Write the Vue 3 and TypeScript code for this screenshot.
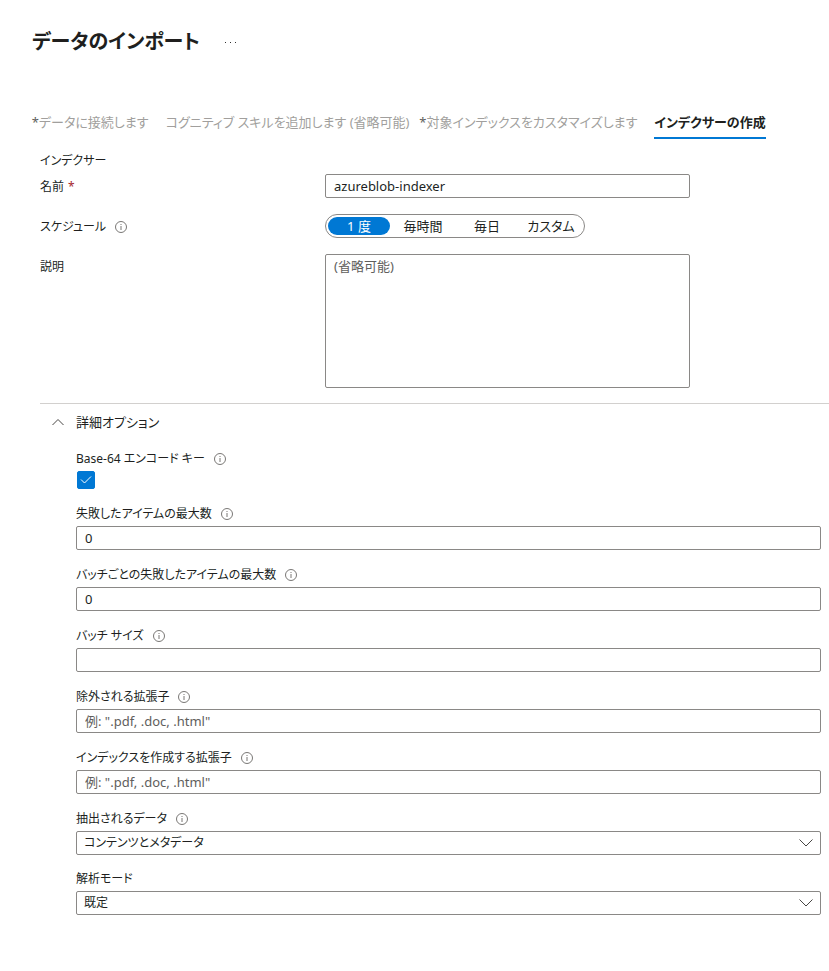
<script setup lang="ts">
import { ref } from 'vue'

interface Tab {
  label: string
  required: boolean
}

interface TextField {
  id: string
  label: string
  placeholder: string
  value: string
}

interface SelectField {
  id: string
  label: string
  info: boolean
  options: string[]
  value: string
}

const tabs: Tab[] = [
  { label: 'データに接続します', required: true },
  { label: 'コグニティブ スキルを追加します (省略可能)', required: false },
  { label: '対象インデックスをカスタマイズします', required: true },
  { label: 'インデクサーの作成', required: false },
]
const activeTab = ref(3)

const indexerName = ref('azureblob-indexer')
const description = ref('')
const schedules: string[] = ['1 度', '毎時間', '毎日', 'カスタム']
const schedule = ref('1 度')

const expanded = ref(true)
const encodeKeys = ref(true)

const textFields = ref<TextField[]>([
  { id: 'max-failed', label: '失敗したアイテムの最大数', placeholder: '', value: '0' },
  { id: 'max-failed-batch', label: 'バッチごとの失敗したアイテムの最大数', placeholder: '', value: '0' },
  { id: 'batch-size', label: 'バッチ サイズ', placeholder: '', value: '' },
  { id: 'excluded', label: '除外される拡張子', placeholder: '例: ".pdf, .doc, .html"', value: '' },
  { id: 'indexed', label: 'インデックスを作成する拡張子', placeholder: '例: ".pdf, .doc, .html"', value: '' },
])

const selectFields = ref<SelectField[]>([
  { id: 'extract', label: '抽出されるデータ', info: true, options: ['コンテンツとメタデータ'], value: 'コンテンツとメタデータ' },
  { id: 'parsing', label: '解析モード', info: false, options: ['既定'], value: '既定' },
])
</script>

<template>
  <main class="page">
    <header class="header">
      <h1 class="title">データのインポート</h1>
      <button class="more" type="button" aria-label="その他">
        <svg width="13" height="3" viewBox="0 0 13 3"><path d="M1 1h1v1H1zM6 1h1v1H6zM11 1h1v1h-1z" fill="#323130" /></svg>
      </button>
    </header>

    <nav class="tabs">
      <button
        v-for="(tab, i) in tabs"
        :key="tab.label"
        type="button"
        class="tab"
        :class="{ active: i === activeTab }"
        @click="activeTab = i"
      >
        <span v-if="tab.required" class="tab-star">*</span>{{ tab.label }}
      </button>
    </nav>

    <section class="basics">
      <h2 class="section-title">インデクサー</h2>
      <div class="row">
        <label class="label" for="name">名前 <span class="required">*</span></label>
        <input id="name" v-model="indexerName" class="control" type="text" />
      </div>
      <div class="row">
        <div id="schedule-label" class="label">
          スケジュール
          <svg class="info" viewBox="0 0 12 12"><circle cx="6" cy="6" r="5.5" /><path d="M6 5v4M6 3v1" /></svg>
        </div>
        <div class="segments" role="radiogroup" aria-labelledby="schedule-label">
          <label v-for="s in schedules" :key="s" class="segment" :class="{ on: s === schedule }">
            <input v-model="schedule" class="segment-input" type="radio" name="schedule" :value="s" />{{ s }}
          </label>
        </div>
      </div>
      <div class="row">
        <label class="label" for="description">説明</label>
        <textarea id="description" v-model="description" class="control area" placeholder="(省略可能)"></textarea>
      </div>
    </section>

    <section class="advanced">
      <button class="toggle" type="button" :aria-expanded="expanded" @click="expanded = !expanded">
        <svg class="chevron" :class="{ closed: !expanded }" width="12" height="8" viewBox="0 0 12 8"><path d="M.5 7L6 1.5 11.5 7" /></svg>
        詳細オプション
      </button>

      <div v-if="expanded" class="fields">
        <div class="check-field">
          <label class="label" for="encode">
            Base-64 エンコード キー
            <svg class="info" viewBox="0 0 12 12"><circle cx="6" cy="6" r="5.5" /><path d="M6 5v4M6 3v1" /></svg>
          </label>
          <span class="check">
            <input id="encode" v-model="encodeKeys" class="check-input" type="checkbox" />
            <svg v-if="encodeKeys" class="check-mark" width="12" height="8" viewBox="0 0 12 8"><path d="M1 3.5L4.5 7 11 .5" /></svg>
          </span>
        </div>

        <div v-for="f in textFields" :key="f.id" class="field">
          <label class="label" :for="f.id">
            {{ f.label }}
            <svg class="info" viewBox="0 0 12 12"><circle cx="6" cy="6" r="5.5" /><path d="M6 5v4M6 3v1" /></svg>
          </label>
          <input :id="f.id" v-model="f.value" class="control" type="text" :placeholder="f.placeholder" />
        </div>

        <div class="selects">
          <div v-for="f in selectFields" :key="f.id" class="field">
            <label class="label" :for="f.id">
              {{ f.label }}
              <svg v-if="f.info" class="info" viewBox="0 0 12 12"><circle cx="6" cy="6" r="5.5" /><path d="M6 5v4M6 3v1" /></svg>
            </label>
            <span class="select-wrap">
              <select :id="f.id" v-model="f.value" class="control select">
                <option v-for="o in f.options" :key="o">{{ o }}</option>
              </select>
              <svg class="chevron drop" width="14" height="8" viewBox="0 0 14 8"><path d="M.5 .5L7 7 13.5 .5" /></svg>
            </span>
          </div>
        </div>
      </div>
    </section>
  </main>
</template>

<style>
body {
  background: #fff;
}
</style>

<style scoped>
.page {
  padding: 24px 0 56px;
  color: #201f1e;
  font-family: "Noto Sans", "Noto Sans CJK JP", sans-serif;
  font-feature-settings: "palt";
  font-size: 13px;
  line-height: 20px;
}

.page button,
.page input,
.page textarea,
.page select {
  margin: 0;
  color: inherit;
  font: inherit;
  font-feature-settings: inherit;
}

.header {
  display: flex;
  align-items: center;
  gap: 24px;
  padding-left: 32px;
}

.title {
  margin: 0;
  font-size: 20px;
  font-weight: 600;
  line-height: 36px;
}

.more {
  display: flex;
  padding: 0;
  border: 0;
  background: none;
}

.tabs {
  display: flex;
  gap: 17px;
  margin-top: 48px;
  padding-left: 39px;
}

.tab {
  position: relative;
  padding: 4px 0 5px;
  border: 0;
  border-bottom: 2px solid transparent;
  background: none;
  white-space: nowrap;
}

.page .tab {
  color: #a19f9d;
}

.page .tab.active {
  border-bottom-color: #0078d4;
  color: #201f1e;
  font-weight: 600;
}

.tab-star {
  position: absolute;
  right: 100%;
  color: #605e5c;
}

.basics {
  display: grid;
  gap: 16px;
  padding: 12px 8px 15px 40px;
}

.section-title {
  margin: 0 0 -13px;
  font-size: 12px;
  font-weight: 400;
}

.row {
  display: grid;
  grid-template-columns: 285px minmax(0, 365px);
}

.label {
  display: flex;
  align-items: center;
  gap: 9px;
  box-sizing: border-box;
  height: 24px;
  font-size: 12px;
}

.row .label {
  padding-top: 2px;
}

.required {
  margin-left: -5px;
  color: #a4262c;
}

.info {
  width: 12px;
  height: 12px;
  fill: none;
  stroke: #797775;
}

.control {
  box-sizing: border-box;
  width: 100%;
  height: 24px;
  padding: 0 8px;
  border: 1px solid #8a8886;
  border-radius: 2px;
  background: #fff;
}

.control::placeholder {
  color: #605e5c;
  opacity: 1;
}

.area {
  display: block;
  height: 134px;
  padding-top: 1px;
  resize: none;
}

.segments {
  display: flex;
  gap: 2px;
  justify-self: start;
  box-sizing: border-box;
  height: 24px;
  padding: 2px;
  border: 1px solid #8a8886;
  border-radius: 12px;
}

.segment {
  position: relative;
  width: 62px;
  border-radius: 9px;
  line-height: 18px;
  text-align: center;
}

.segment.on {
  background: #0078d4;
  color: #fff;
}

.segment-input {
  position: absolute;
  inset: 0;
  opacity: 0;
}

.advanced {
  margin-left: 40px;
  border-top: 1px solid #d2d0ce;
}

.toggle {
  display: flex;
  align-items: center;
  gap: 12px;
  padding: 8px 0 8px 12px;
  border: 0;
  background: none;
}

.chevron {
  fill: none;
  stroke: #484644;
}

.closed {
  transform: rotate(180deg);
}

.fields {
  display: grid;
  gap: 13px;
  padding: 7px 8px 0 36px;
}

.selects {
  display: grid;
  gap: 12px;
}

.check,
.select-wrap {
  display: grid;
  align-items: center;
}

.check {
  width: 18px;
  height: 18px;
  margin-left: 1px;
  justify-items: center;
}

.check-input,
.check-mark,
.select,
.drop {
  grid-area: 1 / 1;
}

.check-input {
  width: 18px;
  height: 18px;
  border: 1px solid #8a8886;
  border-radius: 2px;
  appearance: none;
}

.check-input:checked {
  border-color: #0078d4;
  background: #0078d4;
}

.check-mark {
  fill: none;
  stroke: #fff;
  pointer-events: none;
}

.page .select {
  appearance: none;
  padding: 0 7px;
  font-size: 12px;
}

.drop {
  justify-self: end;
  margin-right: 8px;
  pointer-events: none;
}
</style>
